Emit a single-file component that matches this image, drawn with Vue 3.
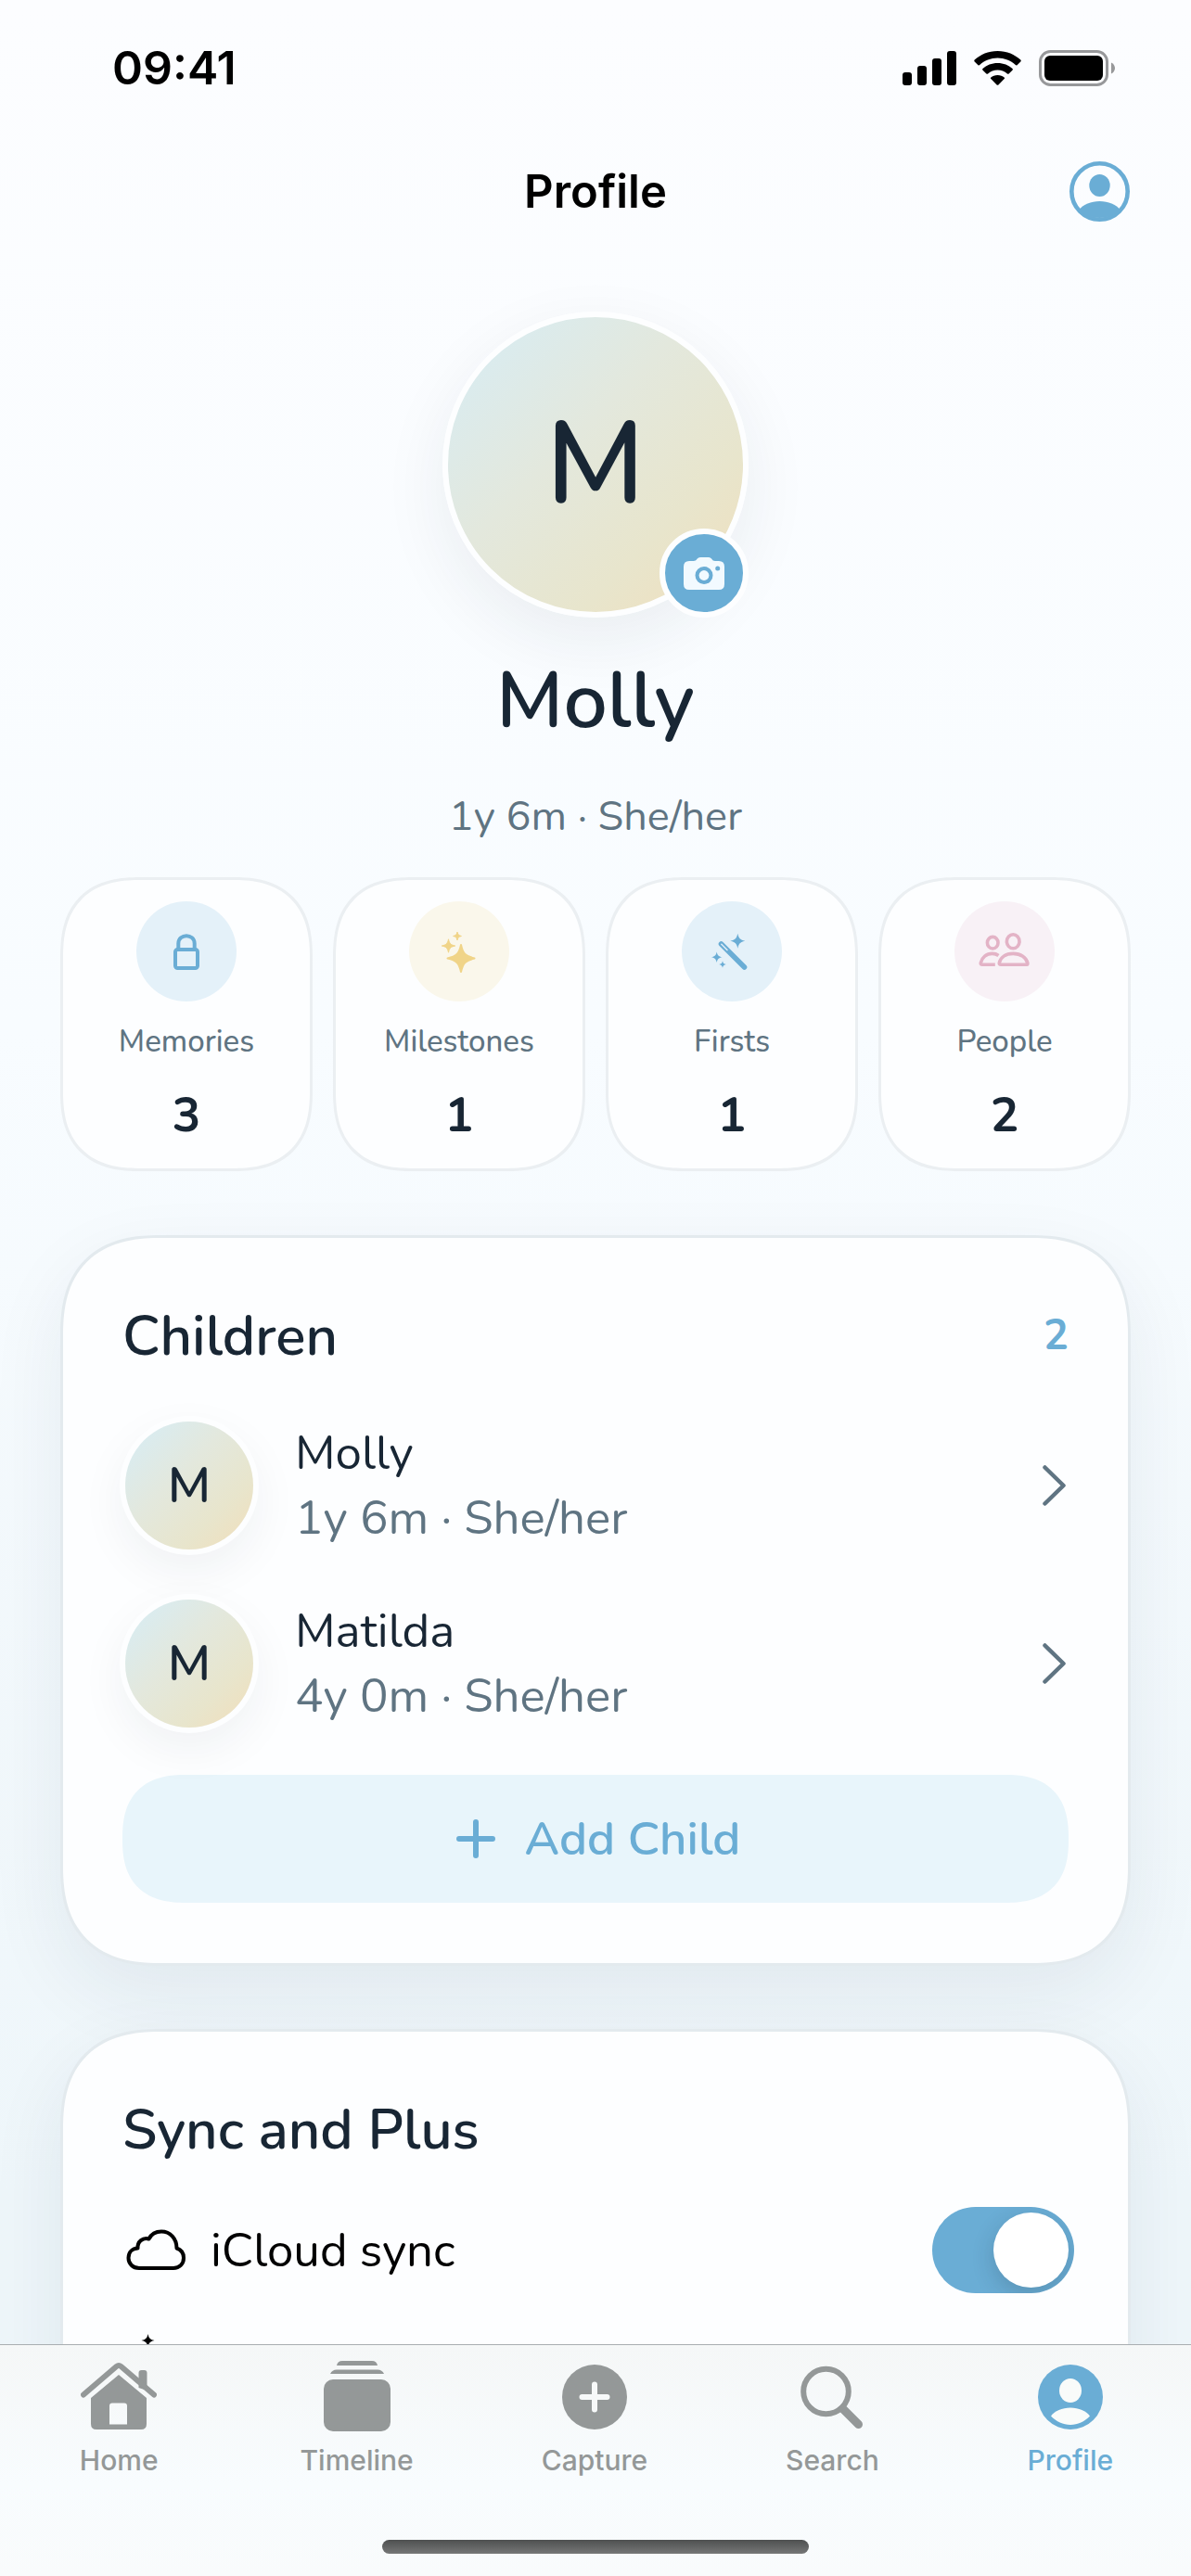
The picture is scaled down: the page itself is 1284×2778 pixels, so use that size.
<script setup>
import { ref } from 'vue'

const star = (cx, cy, rx, ry = rx) => {
  const a = rx * 0.14
  const b = ry * 0.14
  const c = rx * 0.34
  const d = ry * 0.34
  return `M${cx} ${cy - ry}C${cx + a} ${cy - d} ${cx + c} ${cy - b} ${cx + rx} ${cy}` +
    `C${cx + c} ${cy + b} ${cx + a} ${cy + d} ${cx} ${cy + ry}` +
    `C${cx - a} ${cy + d} ${cx - c} ${cy + b} ${cx - rx} ${cy}` +
    `C${cx - c} ${cy - b} ${cx - a} ${cy - d} ${cx} ${cy - ry}Z`
}

const stats = [
  { id: 'memories', label: 'Memories', value: 3 },
  { id: 'milestones', label: 'Milestones', value: 1 },
  { id: 'firsts', label: 'Firsts', value: 1 },
  { id: 'people', label: 'People', value: 2 }
]

const children = [
  { name: 'Molly', detail: '1y 6m · She/her' },
  { name: 'Matilda', detail: '4y 0m · She/her' }
]

const tabs = ['Home', 'Timeline', 'Capture', 'Search', 'Profile']
const activeTab = ref('Profile')
const icloudSync = ref(true)
</script>

<template>
  <div class="app">
    <main class="content">
      <div class="status">
        <span class="time">09:41</span>
        <span class="indicators">
          <svg width="58" height="37" viewBox="0 0 58 37" aria-hidden="true">
            <rect x="0" y="23" width="10" height="14" rx="3" />
            <rect x="16" y="16" width="10" height="21" rx="3" />
            <rect x="32" y="8" width="10" height="29" rx="3" />
            <rect x="48" y="0" width="10" height="37" rx="3" />
          </svg>
          <svg width="51" height="37" viewBox="0 0 51 37" aria-hidden="true">
            <path d="M25.500 0C35.500 0 44 3.800 50.300 9.600Q51.200 10.500 50.300 11.400L46.500 15.200Q45.700 15.900 44.800 15.100C39.600 10.400 32.900 7.600 25.500 7.600S11.400 10.400 6.200 15.100Q5.300 15.900 4.500 15.200L.7 11.400Q-.2 10.500 .7 9.600C7 3.800 15.500 0 25.500 0Z" />
            <path d="M25.500 13C31.800 13 37.300 15.300 41.500 19Q42.400 19.900 41.500 20.700L37.600 24.500Q36.800 25.200 35.900 24.500C33.100 22 29.500 20.500 25.500 20.500S17.900 22 15.100 24.500Q14.200 25.200 13.400 24.500L9.500 20.700Q8.600 19.900 9.500 19C13.700 15.300 19.200 13 25.500 13Z" />
            <path d="M25.500 26C28.400 26 30.900 27 32.700 28.500Q33.500 29.300 32.700 30.100L26.400 36.400Q25.500 37.200 24.600 36.400L18.300 30.100Q17.500 29.300 18.300 28.500C20.100 27 22.600 26 25.500 26Z" />
          </svg>
          <svg width="82" height="39" viewBox="0 0 82 39" aria-hidden="true">
            <rect x="1.500" y="1.500" width="72" height="36" rx="11" fill="none" stroke="#97989a" stroke-width="3" />
            <rect x="6" y="6" width="63" height="27" rx="6" />
            <path d="M78 13.500C80.500 14.500 82 17 82 19.500S80.500 24.500 78 25.500Z" fill="#97989a" />
          </svg>
        </span>
      </div>

      <header class="topbar">
        <h1>Profile</h1>
        <button type="button" class="account" aria-label="Account">
          <svg width="65" height="65" viewBox="0 0 65 65" aria-hidden="true">
            <circle cx="32.500" cy="32.500" r="30.200" fill="none" stroke="currentColor" stroke-width="4.600" />
            <ellipse cx="32.500" cy="26" rx="11.200" ry="12" fill="currentColor" />
            <path d="M10.500 52C15 46.500 23 43 32.500 43S50 46.500 54.500 52A31.500 31.500 0 0 1 10.500 52Z" fill="currentColor" />
          </svg>
        </button>
      </header>

      <section class="hero">
        <div class="portrait">
          <span class="avatar avatar-large">M</span>
          <button type="button" class="camera" aria-label="Change photo">
            <svg width="44" height="35" viewBox="0 0 44 35" aria-hidden="true">
              <path fill="#f2faff" fill-rule="evenodd" d="M6 4H10.500C12.500 4 13.500 3 14.500 1.700Q15.800 0 18 0H27Q29 0 30.300 1.700C31.300 3 32 4 34 4H38Q44 4 44 10V29Q44 35 38 35H6Q0 35 0 29V10Q0 4 6 4ZM22 10A9.500 9.500 0 1 0 22 29A9.500 9.500 0 1 0 22 10ZM36.700 9.600A2.500 2.500 0 1 0 36.700 14.600A2.500 2.500 0 1 0 36.700 9.600Z" />
              <circle cx="22" cy="19.500" r="5.400" fill="#f2faff" />
            </svg>
          </button>
        </div>
        <h2 class="name">Molly</h2>
        <p class="about">1y 6m · She/her</p>
      </section>

      <section class="stats" aria-label="Totals">
        <article v-for="s in stats" :key="s.id" class="stat">
          <svg class="badge" :class="s.id" width="108" height="108" viewBox="0 0 108 108" aria-hidden="true">
            <g v-if="s.id === 'memories'" fill="none" stroke="currentColor">
              <rect x="42" y="52" width="24" height="20" rx="2.500" stroke-width="4" />
              <path d="M45.300 51V45.500C45.300 34.500 62.700 34.500 62.700 45.500V51" stroke-width="4" />
            </g>
            <g v-else-if="s.id === 'milestones'" fill="currentColor" stroke="currentColor" stroke-linejoin="round">
              <path :d="star(56, 61.500, 14.500)" stroke-width="2" />
              <path :d="star(42.500, 48, 7.200)" stroke-width="1" />
              <path :d="star(52, 37.500, 4.400)" stroke-width="1" />
            </g>
            <g v-else-if="s.id === 'firsts'" fill="currentColor">
              <path d="M42.500 46L67.500 71" stroke="currentColor" stroke-width="5.600" stroke-linecap="round" />
              <path d="M42.800 46.300L49 52.500" stroke="#e4f0f9" stroke-width="1.400" stroke-linecap="round" />
              <path :d="star(60.300, 42.700, 8)" />
              <path :d="star(37.700, 60.300, 5.800)" />
              <path :d="star(44, 68, 3.800)" />
            </g>
            <g v-else fill="none" stroke="currentColor" stroke-width="3.600">
              <ellipse cx="41.200" cy="44.700" rx="5.800" ry="6.300" />
              <ellipse cx="63.200" cy="43.300" rx="6.800" ry="7.500" />
              <path d="M50 68.300H78Q79.200 68.300 78.800 66.500C77.500 60.500 71.500 56.400 63.300 56.400S49.500 60.500 48.300 66.500Q48 68.300 50 68.300Z" />
              <path d="M47.500 58.500C45.500 57 43 56.400 40.800 56.400C34.500 56.400 29.600 60.500 28.300 66.300Q28 68.300 30 68.300H43.800" />
            </g>
          </svg>
          <span class="stat-label">{{ s.label }}</span>
          <strong class="stat-value">{{ s.value }}</strong>
        </article>
      </section>

      <section class="card">
        <div class="card-head">
          <h3>Children</h3>
          <span class="count">{{ children.length }}</span>
        </div>
        <div class="people-list">
          <a v-for="c in children" :key="c.name" class="person" href="#">
            <span class="avatar">M</span>
            <span class="person-text">
              <span class="person-name">{{ c.name }}</span>
              <span class="person-detail">{{ c.detail }}</span>
            </span>
            <svg class="chevron" width="28" height="46" viewBox="0 0 28 46" fill="none" stroke="currentColor" stroke-width="4.500" stroke-linecap="round" stroke-linejoin="round" aria-hidden="true">
              <path d="M2.500 3.500L22.500 23L2.500 42.500" />
            </svg>
          </a>
        </div>
        <button type="button" class="add">
          <svg width="42" height="42" viewBox="0 0 42 42" stroke="currentColor" stroke-width="6" stroke-linecap="round" aria-hidden="true">
            <path d="M21 3V39M3 21H39" />
          </svg>
          Add Child
        </button>
      </section>

      <section class="card">
        <div class="card-head">
          <h3>Sync and Plus</h3>
        </div>
        <div class="setting">
          <svg width="65" height="45" viewBox="0 0 65 45" fill="none" stroke="currentColor" stroke-width="4" stroke-linejoin="round" aria-hidden="true">
            <path d="M14 42C7 42 2.500 37 2.500 31C2.500 25 6.500 20.800 12.500 20.500C12 13.500 18 8.500 24.500 10.500C27 5.500 32 2.500 38 2.500C47.500 2.500 54.500 10 54.500 20.500C59 22 62 26 62 31C62 37.500 57.500 42 51 42Z" />
          </svg>
          <label for="icloud">iCloud sync</label>
          <input id="icloud" v-model="icloudSync" type="checkbox" role="switch" class="toggle" />
        </div>
        <div class="setting plus">
          <svg width="65" height="65" viewBox="0 0 65 65" fill="currentColor" aria-hidden="true">
            <path :d="star(23.500, 9, 7)" />
            <path :d="star(11, 23, 9)" />
            <path :d="star(32, 42, 20)" />
          </svg>
        </div>
      </section>
    </main>

    <nav class="tabbar" aria-label="Main">
      <div class="tabs">
        <a v-for="t in tabs" :key="t" href="#" class="tab" :class="{ active: t === activeTab }" @click.prevent="activeTab = t">
          <svg v-if="t === 'Home'" width="82" height="76" viewBox="0 -2 82 76" aria-hidden="true">
            <path d="M62.500 27V11Q62.500 8 65.500 8H68.500Q71.500 8 71.500 11V30Z" fill="currentColor" />
            <path d="M3 34.500L38.500 4Q41 2 43.500 4L79 34.500" fill="none" stroke="currentColor" stroke-width="6" stroke-linecap="round" />
            <path fill="currentColor" fill-rule="evenodd" d="M41 13L71 38V66Q71 72 65 72H17Q11 72 11 66V38ZM34 43.500Q31 43.500 31 46.500V66.500H50V46.500Q50 43.500 47 43.500Z" />
          </svg>
          <svg v-else-if="t === 'Timeline'" width="72" height="76" viewBox="0 0 72 76" fill="currentColor" aria-hidden="true">
            <path d="M14 5Q15 0 20 0H52Q57 0 58 5Z" />
            <path d="M7 14Q9 9.500 14 9.500H58Q63 9.500 65 14Z" />
            <rect y="20" width="72" height="56" rx="10" />
          </svg>
          <svg v-else-if="t === 'Capture'" width="70" height="76" viewBox="0 -4 70 76" aria-hidden="true">
            <circle cx="35" cy="35" r="35" fill="currentColor" />
            <path d="M35 21.500V48.500M21.500 35H48.500" stroke="#f7f9f9" stroke-width="6" stroke-linecap="round" />
          </svg>
          <svg v-else-if="t === 'Search'" width="68" height="76" viewBox="0 -6 68 76" fill="none" stroke="currentColor" stroke-linecap="round" aria-hidden="true">
            <circle cx="27.500" cy="27" r="24.300" stroke-width="6" />
            <path d="M46 46L62.500 62.500" stroke-width="9" />
          </svg>
          <svg v-else width="70" height="76" viewBox="0 -4 70 76" aria-hidden="true">
            <circle cx="35" cy="35" r="35" fill="currentColor" />
            <ellipse cx="35" cy="28" rx="12" ry="13" fill="#f9fbfa" />
            <path d="M14 55.500C18 50 26 46.500 35 46.500S52 50 56 55.500C50 61.500 43 65 35 65S20 61.500 14 55.500Z" fill="#f9fbfa" />
          </svg>
          <span>{{ t }}</span>
        </a>
      </div>
      <div class="home-indicator"></div>
    </nav>
  </div>
</template>

<style>
body {
  margin: 0;
}
</style>

<style scoped>
.app {
  --ink: #182634;
  --muted: #5f7482;
  --blue: #6aadd5;
  display: flex;
  flex-direction: column;
  height: 100vh;
  box-sizing: border-box;
  background: linear-gradient(#fcfdff 0%, #f8fcff 40%, #eef6fa 85%);
  font-family: Nunito, Lato, sans-serif;
  color: var(--ink);
}
h1, h2, h3, p {
  margin: 0;
}
button {
  border: 0;
  padding: 0;
  font: inherit;
  cursor: pointer;
}
a {
  color: inherit;
  text-decoration: none;
}
svg {
  display: block;
  flex: none;
}
.content {
  flex: 1;
  min-height: 0;
  overflow-y: auto;
  scrollbar-width: none;
  padding: 0 65px;
}
.status {
  display: flex;
  justify-content: space-between;
  align-items: center;
  height: 146px;
  padding: 0 17px 0 56px;
  color: #000;
}
.time {
  font: 600 50px/60px Inter, sans-serif;
}
.indicators {
  display: flex;
  align-items: center;
  gap: 19px;
}
.topbar {
  display: grid;
  grid-template-columns: 1fr auto 1fr;
  align-items: center;
  height: 121px;
  padding: 0 1px;
}
.topbar h1 {
  grid-column: 2;
  font: 600 49px/60px Inter, sans-serif;
  color: #000;
}
.account {
  justify-self: end;
  background: none;
  color: var(--blue);
}
.hero {
  display: flex;
  flex-direction: column;
  align-items: center;
  padding-top: 69px;
}
.portrait {
  position: relative;
}
.avatar {
  display: flex;
  align-items: center;
  justify-content: center;
  flex: none;
  width: 138px;
  height: 138px;
  box-sizing: border-box;
  border-radius: 50%;
  background: linear-gradient(135deg, #d9ecf1 10%, #e3e8dd 42%, #e8e5cc 72%, #efe0bf 92%);
  box-shadow: 0 0 0 6px #fdfeff, 0 18px 54px rgba(24, 38, 52, 0.07);
  font-size: 54px;
  font-weight: 600;
}
.avatar-large {
  width: 330px;
  height: 330px;
  border: 6px solid #fdfeff;
  background-origin: border-box;
  box-shadow: 0 24px 72px rgba(24, 38, 52, 0.07);
  font-size: 124px;
}
.camera {
  position: absolute;
  right: 0;
  bottom: 0;
  display: flex;
  align-items: center;
  justify-content: center;
  width: 96px;
  height: 96px;
  border: 6px solid #fdfeff;
  border-radius: 50%;
  background: var(--blue);
}
.name {
  margin-top: 33px;
  font-size: 84px;
  line-height: 116px;
  font-weight: 600;
}
.about {
  margin-top: 35px;
  font-size: 45px;
  line-height: 62px;
  color: var(--muted);
}
.stats {
  display: grid;
  grid-template-columns: repeat(4, 1fr);
  gap: 22px;
  margin-top: 34px;
}
.stat {
  display: flex;
  flex-direction: column;
  align-items: center;
  padding: 23px 0 22px;
  border: 3px solid #ebeff2;
  border-radius: 66px;
  background: #fdfeff;
}
.badge {
  border-radius: 50%;
  background: #e4f1f9;
  color: var(--blue);
}
.badge.milestones {
  background: #faf7eb;
  color: #f0d488;
}
.badge.people {
  background: #f8f1f6;
  color: #e3b3c6;
}
.stat-label {
  margin-top: 21px;
  font-size: 33px;
  line-height: 46px;
  font-weight: 500;
  color: var(--muted);
}
.stat-value {
  margin-top: 21px;
  font-size: 51px;
  line-height: 70px;
  font-weight: 700;
}
.card {
  margin-top: 69px;
  padding: 65px 64px;
  border: 3px solid #e3eaee;
  border-radius: 90px;
  background: #fdfeff;
  box-shadow: 0 30px 84px rgba(24, 38, 70, 0.07);
}
.card + .card {
  margin-top: 68px;
}
.card-head {
  display: flex;
  align-items: center;
  justify-content: space-between;
}
h3 {
  font-size: 60px;
  line-height: 82px;
  font-weight: 600;
}
.count {
  font-size: 45px;
  line-height: 62px;
  font-weight: 700;
  color: var(--blue);
}
.people-list {
  display: flex;
  flex-direction: column;
  gap: 52px;
  margin-top: 50px;
}
.person {
  display: flex;
  align-items: center;
  height: 140px;
  padding-left: 3px;
}
.person-text {
  display: flex;
  flex: 1;
  flex-direction: column;
  margin-left: 45px;
  font-size: 51px;
  line-height: 70px;
}
.person-detail,
.chevron {
  color: var(--muted);
}
.add {
  display: flex;
  align-items: center;
  justify-content: center;
  gap: 32px;
  width: 100%;
  height: 138px;
  margin-top: 50px;
  padding-left: 6px;
  border-radius: 56px;
  background: #e8f5fb;
  color: var(--blue);
  font-size: 51px;
  font-weight: 600;
}
.setting {
  display: flex;
  align-items: center;
  gap: 26px;
  height: 93px;
  margin-top: 42px;
  padding-left: 4px;
  color: #000;
  font-size: 51px;
  line-height: 70px;
}
.setting label {
  flex: 1;
}
.plus {
  align-items: flex-start;
}
.toggle {
  appearance: none;
  width: 153px;
  height: 93px;
  margin: 0 -6px 0 0;
  padding: 6px;
  box-sizing: border-box;
  border-radius: 47px;
  background: #d9dee2;
  overflow: hidden;
  cursor: pointer;
}
.toggle::before {
  content: '';
  display: block;
  width: 81px;
  height: 81px;
  border-radius: 50%;
  background: #fff;
  box-shadow: 0 8px 24px rgba(24, 38, 52, 0.2);
}
.toggle:checked {
  background: var(--blue);
}
.toggle:checked::before {
  margin-left: auto;
}
.tabbar {
  position: relative;
  flex: none;
  border-top: 1px solid #a9aeb1;
  background: linear-gradient(#f5f7f7, #f8fcfe 60%, #f9fbfc);
  padding-bottom: 24px;
}
.tabs {
  display: grid;
  grid-template-columns: repeat(5, 1fr);
  padding-right: 2px;
}
.tab {
  display: flex;
  flex-direction: column;
  align-items: center;
  gap: 13px;
  padding-top: 17px;
  color: #949898;
  font: 500 30px/36px Inter, sans-serif;
}
.tab.active {
  color: var(--blue);
}
.home-indicator {
  width: 460px;
  height: 15px;
  margin: 68px auto 0;
  border-radius: 8px;
  background: linear-gradient(#4e5050, #767777);
}
@supports (corner-shape: squircle) {
  .stat {
    border-radius: 86px;
    corner-shape: superellipse(1.3);
  }
  .card {
    border-radius: 108px;
    corner-shape: superellipse(1.3);
  }
  .add {
    border-radius: 68px;
    corner-shape: superellipse(1.3);
  }
}
</style>
